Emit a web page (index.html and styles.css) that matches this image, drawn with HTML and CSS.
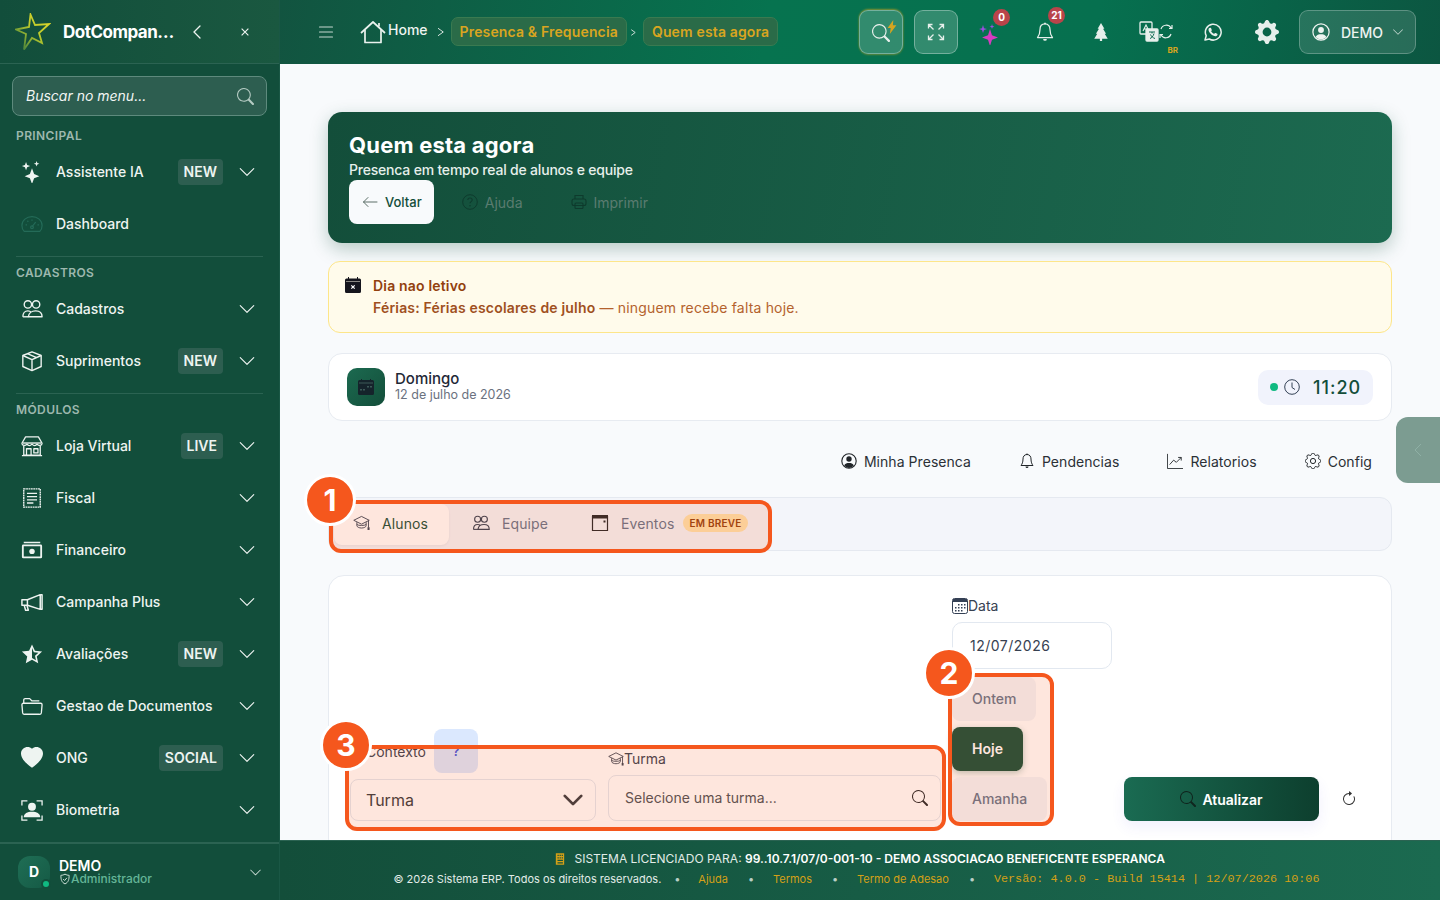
FILE: index.html
```html
<!DOCTYPE html>
<html lang="pt-BR">
<head>
    <meta charset="UTF-8">
    <meta name="viewport" content="width=device-width, initial-scale=1.0">
    <title>Quem esta agora</title>
    <link rel="stylesheet" href="styles.css">
</head>
<body>
    <svg class="sprite" xmlns="http://www.w3.org/2000/svg">
        <symbol id="chev-down" viewBox="0 0 16 16"><path fill="currentColor" d="M1.646 4.646a.5.5 0 0 1 .708 0L8 10.293l5.646-5.647a.5.5 0 0 1 .708.708l-6 6a.5.5 0 0 1-.708 0l-6-6a.5.5 0 0 1 0-.708z"/></symbol>
        <symbol id="search" viewBox="0 0 16 16"><path fill="currentColor" d="M11.742 10.344a6.5 6.5 0 1 0-1.397 1.398h-.001c.03.04.062.078.098.115l3.85 3.85a1 1 0 0 0 1.415-1.414l-3.85-3.85a1.007 1.007 0 0 0-.115-.1zM12 6.5a5.5 5.5 0 1 1-11 0 5.5 5.5 0 0 1 11 0z"/></symbol>
        <symbol id="people" viewBox="0 0 24 24"><g fill="none" stroke="currentColor" stroke-width="1.500" stroke-linejoin="round"><circle cx="7.500" cy="7" r="4"/><circle cx="16.500" cy="7" r="4"/><path d="M2 20.500c0-4 2.400-6.500 5.500-6.500 1.600 0 2.800.6 3.700 1.600M8 20.500c.4-3.800 3.600-6.500 8-6.500s7 2.700 7 6.500z"/><path d="M2 20.500h6"/></g></symbol>
        <symbol id="grad" viewBox="1 3 22 19"><g fill="none" stroke="currentColor" stroke-width="1.200" stroke-linejoin="round"><path d="M12 4 2 9l10 5 10-5z"/><path d="M6 11.500v4.500c0 1.600 3 3 6 3s6-1.400 6-3v-4.500"/><path d="M6 14.500c2 1.600 10 1.600 12 0"/><path d="M21 9.500v9"/></g><rect x="19.800" y="18" width="2.600" height="3.500" fill="currentColor"/></symbol>
    </svg>

    <div class="app">
        <aside class="sidebar">
            <div class="brand">
                <svg class="brand-logo" viewBox="0 0 36 38"><defs><linearGradient id="star" x1="0" y1="1" x2="1" y2="0"><stop offset="0" stop-color="#2f7440"/><stop offset=".55" stop-color="#b9c92c"/><stop offset="1" stop-color="#e8d92a"/></linearGradient></defs><path fill="none" stroke="url(#star)" stroke-width="1.800" stroke-linejoin="miter" d="M15.500 1.500 20 12l14-1-10 9 3 10-10-5-8 11.500 2-15.500-10-4.500 13-2.500z"/></svg>
                <span class="brand-name">DotCompan…</span>
                <svg class="brand-back" viewBox="0 0 16 16"><path fill="none" stroke="currentColor" stroke-width="1.300" stroke-linecap="round" d="M11 2 5 8l6 6"/></svg>
                <svg class="brand-close" viewBox="0 0 16 16"><path fill="none" stroke="currentColor" stroke-width="1.500" d="M3.500 3.500l9 9m0-9-9 9"/></svg>
            </div>

            <div class="menu-search">
                <span>Buscar no menu...</span>
                <svg class="menu-search-icon"><use href="#search"/></svg>
            </div>

            <nav class="nav">
                <div class="nav-label">PRINCIPAL</div>
                <a class="nav-item">
                    <svg class="nav-icon" viewBox="0 0 24 24"><path fill="currentColor" d="M12 8l2.300 6.200L20 16.500l-5.700 2.300L12 25l-2.300-6.200L4 16.500l5.700-2.300zM5.500 1l1.200 3.300L10 5.500 6.700 6.700 5.500 10 4.300 6.700 1 5.500l3.300-1.200zM17 0l.8 2.200L20 3l-2.200.8L17 6l-.8-2.200L14 3l2.200-.8z"/></svg>
                    <span class="nav-text">Assistente IA</span><span class="nav-badge">NEW</span>
                    <svg class="nav-chev"><use href="#chev-down"/></svg>
                </a>
                <a class="nav-item">
                    <svg class="nav-icon nav-icon-dim" viewBox="0 0 24 24"><g fill="none" stroke="currentColor" stroke-width="1.300"><path d="M3.500 20h17c2-2 2.500-4.500 2.500-6.500C23 8 18 4 12 4S1 8 1 13.500c0 2 .5 4.500 2.500 6.500z"/><path d="M12 15l4-5M5 13h1.500M18 13h1.500M7 8.500l1 1M12 7v1.500"/><circle cx="12" cy="15.500" r="1.500"/></g></svg>
                    <span class="nav-text">Dashboard</span>
                </a>

                <div class="nav-label nav-label-sep">CADASTROS</div>
                <a class="nav-item">
                    <svg class="nav-icon"><use href="#people"/></svg>
                    <span class="nav-text">Cadastros</span>
                    <svg class="nav-chev"><use href="#chev-down"/></svg>
                </a>
                <a class="nav-item">
                    <svg class="nav-icon" viewBox="0 0 24 24"><g fill="none" stroke="currentColor" stroke-width="1.500" stroke-linejoin="round"><path d="M12 2l10 4v12l-10 4.500L2 18V6z"/><path d="M2 6l10 4.500L22 6M12 10.500v12M7 4l10 4.300"/></g></svg>
                    <span class="nav-text">Suprimentos</span><span class="nav-badge">NEW</span>
                    <svg class="nav-chev"><use href="#chev-down"/></svg>
                </a>

                <div class="nav-label nav-label-sep">MÓDULOS</div>
                <a class="nav-item">
                    <svg class="nav-icon" viewBox="0 0 24 24"><g fill="none" stroke="currentColor" stroke-width="1.400" stroke-linejoin="round"><path d="M5 2h14l4 7c0 3-4 3-5.500 1-1.500 2-3.500 2-5.500 0-2 2-4 2-5.500 0C5 12 1 12 1 9z"/><path d="M3 12v10h18V12M1 22.500h22M6 22v-7h5v7M14 15h4.500v4.500H14z"/></g><path fill="currentColor" d="M2 8h20v1.500H2z"/></svg>
                    <span class="nav-text">Loja Virtual</span><span class="nav-badge">LIVE</span>
                    <svg class="nav-chev"><use href="#chev-down"/></svg>
                </a>
                <a class="nav-item">
                    <svg class="nav-icon" viewBox="0 0 24 24"><g fill="none" stroke="currentColor" stroke-width="1.500"><rect x="3" y="2" width="18" height="20" stroke-dasharray="2 .6"/><path d="M6.500 7h11M6.500 10.500h11M6.500 14h11M6.500 17.500h7"/></g></svg>
                    <span class="nav-text">Fiscal</span>
                    <svg class="nav-chev"><use href="#chev-down"/></svg>
                </a>
                <a class="nav-item">
                    <svg class="nav-icon" viewBox="0 0 24 24"><path fill="currentColor" d="M3 3h18v1.600H3zM2.500 6h19A1.500 1.500 0 0 1 23 7.500v12a1.500 1.500 0 0 1-1.500 1.500h-19A1.500 1.500 0 0 1 1 19.500v-12A1.500 1.500 0 0 1 2.500 6zm.5 2v11h18V8z"/><ellipse cx="12" cy="13.500" rx="3" ry="2.800" fill="currentColor"/></svg>
                    <span class="nav-text">Financeiro</span>
                    <svg class="nav-chev"><use href="#chev-down"/></svg>
                </a>
                <a class="nav-item">
                    <svg class="nav-icon" viewBox="0 0 24 24"><g fill="none" stroke="currentColor" stroke-width="1.600" stroke-linejoin="round"><path d="M1 9.500h6L21 4v16L7 15.500H1z"/><path d="M7 9.500v6M3.500 15.500l1.500 5.500h3l-1.500-5.300M21 4h2v16h-2"/></g></svg>
                    <span class="nav-text">Campanha Plus</span>
                    <svg class="nav-chev"><use href="#chev-down"/></svg>
                </a>
                <a class="nav-item">
                    <svg class="nav-icon" viewBox="0 0 24 24"><path fill="currentColor" d="M12 1.500l3.200 7 7.800.9-5.800 5.200 1.600 7.600L12 18.300l-6.800 3.900 1.600-7.600L1 9.400l7.800-.9zm0 4v10.800l4.300 2.500-1-4.900 3.700-3.300-5-.6z"/></svg>
                    <span class="nav-text">Avaliações</span><span class="nav-badge">NEW</span>
                    <svg class="nav-chev"><use href="#chev-down"/></svg>
                </a>
                <a class="nav-item">
                    <svg class="nav-icon" viewBox="0 0 24 24"><g fill="none" stroke="currentColor" stroke-width="1.400" stroke-linejoin="round"><path d="M3 9V5.500A1.500 1.500 0 0 1 4.500 4h5L12 6.500h8"/><path d="M2.500 9h19A1.500 1.500 0 0 1 23 10.500l-.8 9A2 2 0 0 1 20 21H4a2 2 0 0 1-2.200-1.500L1 10.500A1.500 1.500 0 0 1 2.500 9z"/></g></svg>
                    <span class="nav-text">Gestao de Documentos</span>
                    <svg class="nav-chev"><use href="#chev-down"/></svg>
                </a>
                <a class="nav-item">
                    <svg class="nav-icon" viewBox="0 0 16 16"><path fill="currentColor" d="M8 1.314C12.438-3.248 23.534 4.735 8 15-7.534 4.736 3.562-3.248 8 1.314z"/></svg>
                    <span class="nav-text">ONG</span><span class="nav-badge">SOCIAL</span>
                    <svg class="nav-chev"><use href="#chev-down"/></svg>
                </a>
                <a class="nav-item">
                    <svg class="nav-icon" viewBox="0 0 24 24"><path fill="none" stroke="currentColor" stroke-width="1.400" d="M1 7V2h6M17 2h6v5M23 18v5h-6M7 23H1v-5"/><circle cx="12" cy="8.500" r="4.300" fill="currentColor"/><path fill="currentColor" d="M3 20c0-4 4-6 9-6s9 2 9 6z"/></svg>
                    <span class="nav-text">Biometria</span>
                    <svg class="nav-chev"><use href="#chev-down"/></svg>
                </a>
            </nav>

            <div class="side-user">
                <div class="side-avatar">D<i class="side-dot"></i></div>
                <div class="side-user-text">
                    <div class="side-user-name">DEMO</div>
                    <div class="side-user-role">
                        <svg viewBox="0 0 16 16"><path fill="none" stroke="currentColor" stroke-width="1.300" d="M8 1.500c2 1.200 3.800 1.500 5.500 1.600 0 5.500-1 9.500-5.500 11.400C3.500 12.600 2.500 8.600 2.500 3.100 4.200 3 6 2.700 8 1.500zM5.500 8l2 2 3-3.500"/></svg>
                        <span>Administrador</span>
                    </div>
                </div>
                <svg class="side-user-chev"><use href="#chev-down"/></svg>
            </div>
        </aside>

        <div class="main">
            <header class="topbar">
                <svg class="burger" viewBox="0 0 16 16"><path fill="none" stroke="currentColor" stroke-width="1.100" stroke-linecap="round" d="M1.500 3h13M1.500 8h13M1.500 13h13"/></svg>
                <div class="crumbs">
                    <svg class="crumb-home" viewBox="0 0 26 24"><g fill="none" stroke="currentColor" stroke-width="1.700" stroke-linejoin="round"><path d="M1 13 13 2l12 11"/><path d="M5 10v12.500h16V10"/><path d="M19 3v3.500"/></g></svg>
                    <span class="crumb-home-text">Home</span>
                    <svg class="crumb-sep" viewBox="0 0 16 16"><path fill="none" stroke="currentColor" stroke-width="1.300" d="M4 3l7 5-7 5"/></svg>
                    <span class="crumb-pill">Presenca &amp; Frequencia</span>
                    <svg class="crumb-sep crumb-sep-tight" viewBox="0 0 16 16"><path fill="none" stroke="currentColor" stroke-width="1.600" d="M4 3l7 5-7 5"/></svg>
                    <span class="crumb-pill">Quem esta agora</span>
                </div>
                <div class="top-actions">
                    <div class="top-slot top-glass top-glass-glow">
                        <svg class="top-search"><use href="#search"/></svg>
                        <svg class="top-bolt" viewBox="0 0 10 16"><path fill="#d6a520" d="M6.500 0 0 9h3.500L2.500 16 10 6H6z"/></svg>
                    </div>
                    <div class="top-slot top-glass">
                        <svg class="top-icon-18" viewBox="0 0 18 18"><path fill="none" stroke="currentColor" stroke-width="1.300" d="M1.500 5.500v-4h4M1.500 1.500 6.500 6.500M16.500 5.500v-4h-4M16.500 1.500l-5 5M1.500 12.500v4h4M1.500 16.500l5-5M16.500 12.500v4h-4M16.500 16.500l-5-5"/></svg>
                    </div>
                    <div class="top-slot">
                        <svg class="top-icon-24" viewBox="0 0 24 24"><path fill="#d63bc0" d="M12 8l2 6.200 6 2.300-6 2.300-2 6.200-2-6.200-6-2.300 6-2.300z"/><path fill="#9a4fe0" d="M5 4l1 3.300L9 8 6 9 5 12 4 9 1 8l3-.7zM14 3l.6 2 1.900.7-1.900.6L14 8l-.6-1.700-1.900-.6 1.900-.7z"/></svg>
                        <span class="top-badge top-badge-zero">0</span>
                    </div>
                    <div class="top-slot">
                        <svg class="top-icon-20" viewBox="0 0 16 16"><path fill="none" stroke="currentColor" stroke-width="1" stroke-linejoin="round" d="M8 1.500c-2.800 0-4 2.200-4 4.500 0 3-.8 5-2 6.500h12c-1.200-1.500-2-3.500-2-6.500 0-2.300-1.200-4.500-4-4.500z"/><path fill="currentColor" d="M6.500 13.500h3a1.500 1.500 0 0 1-3 0zM7.300.5h1.400v1.300H7.300z"/></svg>
                        <span class="top-badge top-badge-many">21</span>
                    </div>
                    <div class="top-slot">
                        <svg class="top-icon-18" viewBox="0 0 16 16"><path fill="currentColor" d="M8 0l3 5H9.800l2.700 4.500h-1.200L14 14H9v2H7v-2H2l2.700-4.500H3.500L6.200 5H5z"/></svg>
                    </div>
                    <div class="top-slot">
                        <svg class="top-translate" viewBox="0 0 34 22"><g fill="none" stroke="currentColor" stroke-width="1.300"><rect x="1" y="1" width="12" height="12" rx="1"/><rect x="7" y="8" width="12" height="12" rx="1" fill="#e8f0ec"/><path d="M4 10l3-6 3 6M5 8h4" stroke-width="1.100"/><path d="M10 11h6M13 11v1.500M15 12.500c-.8 3-2.500 4.500-4 5M11.500 13.500c.8 2 2.400 3.300 4.500 4" stroke="#0c6a50" stroke-width="1"/><path d="M22 8a5.500 5.500 0 0 1 10-1M32 13a5.500 5.500 0 0 1-10 1M33 4v3.500h-3M21 17v-3.500h3" stroke-width="1.200"/></g></svg>
                        <span class="top-br">BR</span>
                    </div>
                    <div class="top-slot">
                        <svg class="top-icon-18 top-whats" viewBox="0 0 18 18"><path fill="none" stroke="currentColor" stroke-width="1.500" stroke-linejoin="round" d="M1 17l1.200-4.300A7.900 7.900 0 1 1 5.300 16z"/><path fill="currentColor" d="M6.300 4.800c.3 0 .6 0 .8.500l.7 1.600c.1.300 0 .5-.1.700l-.6.700c.7 1.200 1.700 2.100 3 2.700l.8-.9c.2-.2.400-.3.700-.1l1.500.7c.4.200.4.400.4.700 0 1.100-1.200 1.800-2.100 1.800-2.900-.2-6.700-3.400-6.900-6.500 0-.9.500-1.900 1.800-1.900z"/></svg>
                    </div>
                    <div class="top-slot">
                        <svg class="top-gear" viewBox="0 0 16 16"><path fill="currentColor" d="M9.405 1.050c-.413-1.400-2.397-1.400-2.810 0l-.1.340a1.464 1.464 0 0 1-2.105.872l-.31-.17c-1.283-.698-2.686.705-1.987 1.987l.169.311c.446.820.023 1.841-.872 2.105l-.34.100c-1.400.413-1.400 2.397 0 2.810l.34.100a1.464 1.464 0 0 1 .872 2.105l-.17.310c-.698 1.283.705 2.686 1.987 1.987l.311-.169a1.464 1.464 0 0 1 2.105.872l.1.340c.413 1.400 2.397 1.400 2.810 0l.1-.340a1.464 1.464 0 0 1 2.105-.872l.31.170c1.283.698 2.686-.705 1.987-1.987l-.169-.311a1.464 1.464 0 0 1 .872-2.105l.34-.100c1.400-.413 1.400-2.397 0-2.810l-.34-.100a1.464 1.464 0 0 1-.872-2.105l.17-.310c.698-1.283-.705-2.686-1.987-1.987l-.311.169a1.464 1.464 0 0 1-2.105-.872l-.1-.340zM8 10.930a2.929 2.929 0 1 1 0-5.860 2.929 2.929 0 0 1 0 5.858z"/></svg>
                    </div>
                    <div class="top-user">
                        <svg class="top-user-icon" viewBox="0 0 16 16"><circle cx="8" cy="8" r="7.200" fill="none" stroke="currentColor" stroke-width="1.100"/><circle cx="8" cy="6.200" r="2.600" fill="currentColor"/><path fill="currentColor" d="M3.200 12.500C4 10.500 6 10 8 10s4 .5 4.800 2.500A6.500 6.500 0 0 1 8 14.600a6.500 6.500 0 0 1-4.800-2.100z"/></svg>
                        <span>DEMO</span>
                        <svg class="top-user-chev"><use href="#chev-down"/></svg>
                    </div>
                </div>
            </header>

            <main class="content">
                <section class="hero">
                    <h1>Quem esta agora</h1>
                    <p>Presenca em tempo real de alunos e equipe</p>
                    <div class="hero-actions">
                        <button class="btn-back">
                            <svg viewBox="0 0 16 16"><path fill="none" stroke="currentColor" stroke-width="1" stroke-linecap="round" d="M15 8H1.500M6 3.500 1.500 8 6 12.500"/></svg>
                            Voltar
                        </button>
                        <button class="btn-ghost">
                            <svg viewBox="0 0 16 16"><circle cx="8" cy="8" r="7.300" fill="none" stroke="#0e3b2d" stroke-width="1"/><path fill="none" stroke="#0e3b2d" stroke-width="1.100" d="M5.800 6c0-1.300 1-2 2.200-2s2.200.8 2.200 2c0 1.600-2.200 1.600-2.200 3.300"/><circle cx="8" cy="11.700" r=".8" fill="#0e3b2d"/></svg>
                            Ajuda
                        </button>
                        <button class="btn-ghost btn-ghost-print">
                            <svg viewBox="0 0 16 16"><g fill="none" stroke="#0e3b2d" stroke-width="1.100"><path d="M4 5V1.500h8V5"/><rect x="1" y="5" width="14" height="6.500" rx="2"/><rect x="4" y="9" width="8" height="5.500" rx="1"/></g></svg>
                            Imprimir
                        </button>
                    </div>
                </section>

                <section class="notice">
                    <svg class="notice-icon" viewBox="0 0 16 16"><path fill="#15151d" d="M3 0h1v1.500h8V0h1v1.500h1.500A1.500 1.500 0 0 1 16 3v11.500a1.500 1.500 0 0 1-1.500 1.500h-13A1.500 1.500 0 0 1 0 14.500V3a1.500 1.500 0 0 1 1.500-1.500H3zM1 4.500V5h14v-.5z"/><path stroke="#fff" stroke-width="1.200" d="M6.300 8.300l3.400 3.400m0-3.400-3.400 3.400"/></svg>
                    <div>
                        <div class="notice-title">Dia nao letivo</div>
                        <div class="notice-text"><strong>Férias: Férias escolares de julho</strong> — ninguem recebe falta hoje.</div>
                    </div>
                </section>

                <section class="day-card">
                    <div class="day-icon">
                        <svg viewBox="0 0 16 16"><path fill="#15232b" d="M3 0h1v1h8V0h1v1h1.500A1.500 1.500 0 0 1 16 2.500v12a1.500 1.500 0 0 1-1.500 1.500h-13A1.500 1.500 0 0 1 0 14.500v-12A1.500 1.500 0 0 1 1.500 1H3z"/><path fill="#3d5a58" d="M1 3.500h14v1H1zM9 7h2v1.500H9zM12 7h2v1.500h-2zM2 10h2v1.500H2zM5 10h2v1.500H5z"/></svg>
                    </div>
                    <div class="day-text">
                        <div class="day-name">Domingo</div>
                        <div class="day-date">12 de julho de 2026</div>
                    </div>
                    <div class="clock">
                        <i class="clock-dot"></i>
                        <svg viewBox="0 0 16 16"><circle cx="8" cy="8" r="7.300" fill="none" stroke="#334155" stroke-width="1"/><path fill="none" stroke="#334155" stroke-width="1" d="M8 3.500V8.500l3 2"/></svg>
                        <span>11:20</span>
                    </div>
                </section>

                <nav class="quick-links">
                    <a>
                        <svg viewBox="0 0 16 16"><circle cx="8" cy="8" r="7.200" fill="none" stroke="#212529" stroke-width="1.100"/><circle cx="8" cy="6" r="2.700" fill="#212529"/><path fill="#212529" d="M3.200 12.500C4 10.500 6 10 8 10s4 .5 4.800 2.500A6.500 6.500 0 0 1 8 15a6.500 6.500 0 0 1-4.800-2.500z"/></svg>
                        Minha Presenca
                    </a>
                    <a>
                        <svg viewBox="0 0 16 16"><path fill="none" stroke="#212529" stroke-width="1" stroke-linejoin="round" d="M8 1.500c-2.800 0-4 2.200-4 4.500 0 3-.8 5-2 6.500h12c-1.200-1.500-2-3.500-2-6.500 0-2.300-1.200-4.500-4-4.500z"/><path fill="#212529" d="M6.500 13.500h3a1.500 1.500 0 0 1-3 0zM7.500.5h1v1.300h-1z"/></svg>
                        Pendencias
                    </a>
                    <a>
                        <svg viewBox="0 0 18 18"><path fill="none" stroke="#212529" stroke-width="1" d="M.5 1v16.500H18M3 13l4.500-5 3 2.500L16 5M12.500 5H16v3.500"/></svg>
                        Relatorios
                    </a>
                    <a>
                        <svg viewBox="0 0 16 16"><path fill="none" stroke="#212529" stroke-width="1" d="M9.405 1.050c-.413-1.400-2.397-1.400-2.810 0l-.1.340a1.464 1.464 0 0 1-2.105.872l-.31-.17c-1.283-.698-2.686.705-1.987 1.987l.169.311c.446.820.023 1.841-.872 2.105l-.34.100c-1.400.413-1.400 2.397 0 2.810l.34.100a1.464 1.464 0 0 1 .872 2.105l-.17.310c-.698 1.283.705 2.686 1.987 1.987l.311-.169a1.464 1.464 0 0 1 2.105.872l.1.340c.413 1.400 2.397 1.400 2.810 0l.1-.340a1.464 1.464 0 0 1 2.105-.872l.31.170c1.283.698 2.686-.705 1.987-1.987l-.169-.311a1.464 1.464 0 0 1 .872-2.105l.34-.100c1.400-.413 1.400-2.397 0-2.810l-.34-.100a1.464 1.464 0 0 1-.872-2.105l.17-.310c.698-1.283-.705-2.686-1.987-1.987l-.311.169a1.464 1.464 0 0 1-2.105-.872l-.1-.340z"/><circle cx="8" cy="8" r="2.600" fill="none" stroke="#212529" stroke-width="1"/></svg>
                        Config
                    </a>
                </nav>

                <div class="tabs">
                    <a class="tab tab-active"><svg class="tab-icon"><use href="#grad"/></svg>Alunos</a>
                    <a class="tab tab-team"><svg class="tab-icon"><use href="#people"/></svg>Equipe</a>
                    <a class="tab tab-events">
                        <svg class="tab-icon" viewBox="0 0 18 18"><path fill="none" stroke="#212529" stroke-width="1.200" d="M1.500 2.500h15v14h-15z"/><path fill="#212529" d="M1 1h16v3.500H1z"/><rect x="12.500" y="6.500" width="2" height="2" fill="#212529"/></svg>
                        Eventos<span class="tab-badge">EM BREVE</span>
                    </a>
                </div>

                <section class="filter-card">
                    <div class="filter-row">
                        <div class="field field-context">
                            <div class="context-head">
                                <span class="field-label">Contexto</span>
                                <button class="help-btn">?</button>
                            </div>
                            <div class="fake-select">
                                <span>Turma</span>
                                <svg viewBox="0 0 16 16"><path fill="none" stroke="#343a40" stroke-width="2" stroke-linecap="round" stroke-linejoin="round" d="M2 5l6 6 6-6"/></svg>
                            </div>
                        </div>
                        <div class="field field-class">
                            <div class="field-label field-label-icon"><svg><use href="#grad"/></svg>Turma</div>
                            <div class="class-search">
                                <span>Selecione uma turma...</span>
                                <svg><use href="#search"/></svg>
                            </div>
                        </div>
                        <div class="field field-date">
                            <div class="field-label field-label-icon">
                                <svg viewBox="0 0 16 16"><rect x=".5" y=".5" width="15" height="15" rx="2" fill="#fff" stroke="#344054"/><path fill="#344054" d="M1 1h14v3H1zM6 6h1.500v1.500H6zM9 6h1.500v1.500H9zM12 6h1.500v1.500H12zM3 9h1.500v1.500H3zM6 9h1.500v1.500H6zM9 9h1.500v1.500H9zM12 9h1.500v1.500H12zM3 12h1.500v1.500H3zM6 12h1.500v1.500H6zM9 12h1.500v1.500H9z"/></svg>
                                Data
                            </div>
                            <div class="date-input">12/07/2026</div>
                            <div class="day-buttons">
                                <button class="day-btn">Ontem</button>
                                <button class="day-btn day-btn-active">Hoje</button>
                                <button class="day-btn">Amanha</button>
                            </div>
                        </div>
                        <button class="btn-refresh-main">
                            <svg><use href="#search"/></svg>
                            Atualizar
                        </button>
                        <button class="btn-reload">
                            <svg viewBox="0 0 16 16"><path fill="#333" d="M8 3a5 5 0 1 0 4.546 2.914.5.5 0 0 1 .908-.417A6 6 0 1 1 8 2v1z"/><path fill="#333" d="M8 4.466V.534a.25.25 0 0 1 .41-.192l2.360 1.966c.12.100.12.284 0 .384L8.410 4.658A.25.25 0 0 1 8 4.466z"/></svg>
                        </button>
                    </div>
                </section>
            </main>

            <footer class="footer">
                <div class="footer-license">
                    <svg viewBox="0 0 12 14"><path fill="#d4a017" d="M1 0h10v14H1zM3 2v1.500h1.500V2zm2.500 0v1.500H7V2zM8 2v1.500h1.500V2zM3 5v1.500h1.500V5zm2.500 0v1.500H7V5zM8 5v1.500h1.500V5zM3 8v1.500h6.500V8zm0 3v1.500h6.500V11z" fill-rule="evenodd"/></svg>
                    <span>SISTEMA LICENCIADO PARA:</span> <strong>99..10.7.1/07/0-001-10 - DEMO ASSOCIACAO BENEFICENTE ESPERANCA</strong>
                </div>
                <div class="footer-meta">
                    <span>© 2026 Sistema ERP. Todos os direitos reservados.</span>
                    <i class="footer-dot-first">•</i><a>Ajuda</a>
                    <i>•</i><a>Termos</a>
                    <i>•</i><a>Termo de Adesao</a>
                    <i>•</i><code>Versão: 4.0.0 - Build 15414 | 12/07/2026 10:06</code>
                </div>
            </footer>
        </div>

        <!-- abas e destaques por cima da tela -->
        <div class="side-tab">
            <svg viewBox="0 0 16 16"><path fill="none" stroke="#8fb0a5" stroke-width="1" d="M11 2 5 8l6 6"/></svg>
        </div>
        <div class="mark mark-tabs"></div>
        <div class="mark mark-days"></div>
        <div class="mark mark-form"></div>
        <div class="pin pin-1">1</div>
        <div class="pin pin-2">2</div>
        <div class="pin pin-3">3</div>
    </div>
</body>
</html>
```

FILE: styles.css
```css
* {
    box-sizing: border-box;
}
html, body {
    height: 100%;
}
body {
    margin: 0;
    font-family: Inter, "Noto Sans", sans-serif;
    color: #212529;
    background-color: #f8fafc;
    overflow: hidden;
}
button {
    font-family: inherit;
    border: none;
    cursor: pointer;
}
.sprite {
    position: absolute;
    width: 0;
    height: 0;
}
.app {
    position: relative;
    display: grid;
    grid-template-columns: 280px 1fr;
    height: 900px;
    overflow: hidden;
}

/* sidebar */
.sidebar {
    display: flex;
    flex-direction: column;
    background-color: #124e3b;
    color: #eef4f1;
    border-right: 1px solid #1a5745;
}
.brand {
    display: flex;
    align-items: center;
    height: 64px;
    padding-left: 15px;
    border-bottom: 1px solid #2b6352;
    background: linear-gradient(90deg, #124e3b, #1a5840);
}
.brand-logo {
    width: 36px;
    height: 38px;
    flex: none;
}
.brand-name {
    margin-left: 12px;
    width: 126px;
    font-size: 17px;
    font-weight: 700;
    letter-spacing: -0.5px;
    color: #fff;
}
.brand-back {
    width: 16px;
    height: 16px;
}
.brand-close {
    width: 12px;
    height: 12px;
    margin-left: 34px;
}
.menu-search {
    display: flex;
    align-items: center;
    justify-content: space-between;
    height: 40px;
    margin: 12px 12px 0 12px;
    padding: 0 12px 0 13px;
    background-color: #2d5e50;
    border: 1px solid #5e8a7d;
    border-radius: 8px;
    font-size: 14px;
    font-style: italic;
    color: #f1f5f3;
}
.menu-search span {
    padding-bottom: 2px;
}
.menu-search-icon {
    width: 17px;
    height: 17px;
    color: #b5cbc3;
}
.nav {
    flex: 1;
    padding: 12px 16px 0;
}
.nav-label {
    height: 16px;
    margin-bottom: 2px;
    font-size: 12px;
    line-height: 16px;
    font-weight: 600;
    letter-spacing: 0.4px;
    color: #9db8ae;
}
.nav-label-sep {
    height: auto;
    margin-top: 6px;
    padding-top: 8px;
    border-top: 1px solid #2b6352;
}
.nav-item {
    display: flex;
    align-items: center;
    height: 52px;
    padding-left: 5px;
    padding-right: 7px;
    font-size: 14px;
    font-weight: 500;
    color: #eef4f1;
}
.nav-icon {
    width: 22px;
    height: 22px;
    flex: none;
    margin-right: 13px;
}
.nav-icon-dim {
    color: #246b58;
}
.nav-text {
    flex: 1;
    padding-bottom: 2px;
    white-space: nowrap;
}
.nav-badge {
    height: 26px;
    padding: 0 6px;
    margin-right: 15px;
    background-color: #2d5e50;
    border-radius: 4px;
    font-size: 14px;
    line-height: 26px;
    font-weight: 600;
}
.nav-chev {
    width: 18px;
    height: 18px;
    flex: none;
    margin-left: auto;
}
.nav-badge + .nav-chev {
    margin-left: 0;
}
.side-user {
    display: flex;
    align-items: center;
    height: 58px;
    padding: 0 17px 0 18px;
    border-top: 2px solid #2b6352;
}
.side-avatar {
    position: relative;
    width: 32px;
    height: 32px;
    border-radius: 12px;
    background: linear-gradient(135deg, #1f6e55, #155a45);
    font-size: 14px;
    line-height: 32px;
    font-weight: 700;
    text-align: center;
    color: #fff;
}
.side-dot {
    position: absolute;
    right: -1px;
    bottom: -1px;
    width: 10px;
    height: 10px;
    background-color: #10b981;
    border: 2px solid #124e3b;
    border-radius: 50%;
}
.side-user-text {
    flex: 1;
    margin-left: 9px;
    line-height: 13px;
}
.side-user-name {
    font-size: 14px;
    font-weight: 600;
    color: #fff;
}
.side-user-role {
    display: flex;
    align-items: center;
    font-size: 12px;
    font-weight: 500;
    color: #64b597;
}
.side-user-role svg {
    width: 12px;
    height: 12px;
    color: #cfe0d9;
}
.side-user-chev {
    width: 13px;
    height: 13px;
    color: #cfe0d9;
}

/* main */
.main {
    display: flex;
    flex-direction: column;
    min-width: 0;
    height: 900px;
}
.topbar {
    display: flex;
    align-items: center;
    height: 64px;
    flex: none;
    padding: 0 24px 0 38px;
    background: linear-gradient(100deg, #125440 0%, #06734f 42%, #06704f 70%, #0c5641 100%);
    color: #eaf2ee;
}
.burger {
    width: 16px;
    height: 16px;
    color: #c5d8d0;
}
.crumbs {
    display: flex;
    align-items: center;
    margin-left: 26px;
}
.crumb-home {
    width: 26px;
    height: 24px;
}
.crumb-home-text {
    margin: 0 0 5px 2px;
    font-size: 14px;
    font-weight: 500;
    color: #eef4f1;
}
.crumb-sep {
    width: 12px;
    height: 12px;
    margin: 0 4px 0 7px;
    color: #dbe7e2;
}
.crumb-sep-tight {
    width: 9px;
    height: 9px;
    margin: 0 5px 0 2px;
}
.crumb-pill {
    height: 29px;
    margin-bottom: 2px;
    padding: 0 8px;
    background-color: #2a6b48;
    border: 1px solid #3a7a50;
    border-radius: 7px;
    font-size: 14px;
    line-height: 27px;
    font-weight: 600;
    letter-spacing: 0.15px;
    color: #d9a520;
    white-space: nowrap;
}
.top-actions {
    display: flex;
    align-items: center;
    gap: 11px;
    margin-left: auto;
}
.top-slot {
    position: relative;
    display: flex;
    align-items: center;
    justify-content: center;
    width: 44px;
    height: 44px;
    color: #e6efeb;
}
.top-glass {
    background-color: rgba(255, 255, 255, 0.18);
    border: 1px solid rgba(255, 255, 255, 0.32);
    border-radius: 9px;
}
.top-glass-glow {
    box-shadow: 0 -1px 2px rgba(214, 165, 32, 0.6), 0 1px 2px rgba(214, 165, 32, 0.4);
}
.top-search {
    width: 18px;
    height: 18px;
    margin-right: 1px;
    margin-top: 2px;
}
.top-bolt {
    position: absolute;
    top: 9px;
    right: 5px;
    width: 10px;
    height: 14px;
}
.top-icon-18 {
    width: 18px;
    height: 18px;
}
.top-whats {
    margin-left: 4px;
}
.top-icon-20 {
    width: 20px;
    height: 20px;
    margin-right: 2px;
}
.top-icon-24 {
    width: 24px;
    height: 24px;
    margin-right: 3px;
    margin-top: 2px;
}
.top-badge {
    position: absolute;
    top: -1px;
    height: 17px;
    background-color: #b9444a;
    border-radius: 9px;
    font-size: 10px;
    line-height: 17px;
    font-weight: 700;
    text-align: center;
    color: #fff;
}
.top-badge-zero {
    right: 3px;
    width: 17px;
}
.top-badge-many {
    right: 3px;
    top: -3px;
    width: 17px;
}
.top-translate {
    width: 34px;
    height: 22px;
}
.top-br {
    position: absolute;
    right: 0;
    bottom: -1px;
    font-size: 8px;
    font-weight: 700;
    color: #d6a520;
}
.top-gear {
    width: 24px;
    height: 24px;
    margin-left: 2px;
}
.top-user {
    display: flex;
    align-items: center;
    width: 117px;
    height: 44px;
    padding: 0 11px 0 12px;
    background-color: rgba(255, 255, 255, 0.12);
    border: 1px solid rgba(255, 255, 255, 0.25);
    border-radius: 9px;
    font-size: 14px;
    font-weight: 500;
    color: #eef4f1;
}
.top-user-icon {
    width: 18px;
    height: 18px;
    margin-right: 11px;
}
.top-user-chev {
    width: 12px;
    height: 12px;
    margin-left: auto;
    color: #c5d8d0;
}

/* conteudo */
.content {
    flex: 1;
    min-height: 0;
    overflow: hidden;
    padding: 48px 48px 0;
}
.hero {
    height: 131px;
    padding: 20px 21px 0;
    background: linear-gradient(100deg, #134e3a, #1c6a50);
    border-radius: 14px;
    box-shadow: 0 6px 18px rgba(19, 78, 58, 0.28);
    color: #fff;
}
.hero h1 {
    margin: 0;
    height: 26px;
    font-size: 22px;
    line-height: 26px;
    font-weight: 700;
    letter-spacing: 0.2px;
}
.hero p {
    margin: 3px 0 0;
    height: 19px;
    font-size: 14px;
    line-height: 18px;
    font-weight: 500;
    color: #e6efeb;
    letter-spacing: -0.2px;
}
.hero-actions {
    display: flex;
    align-items: center;
}
.btn-back {
    display: flex;
    align-items: center;
    gap: 7px;
    height: 44px;
    padding: 0 12px 0 13px;
    background-color: #f8fafc;
    border-radius: 8px;
    font-size: 13px;
    font-weight: 500;
    color: #134e3a;
}
.btn-back svg {
    width: 16px;
    height: 16px;
    color: #5c6f68;
}
.btn-ghost {
    display: flex;
    align-items: center;
    gap: 7px;
    height: 44px;
    margin-left: 28px;
    padding: 0;
    background: none;
    font-size: 14px;
    color: #5a7c70;
}
.btn-ghost svg {
    width: 16px;
    height: 16px;
}
.btn-ghost-print {
    margin-left: 48px;
}
.notice {
    display: flex;
    height: 72px;
    margin-top: 18px;
    padding: 15px 16px 0;
    background-color: #fffbeb;
    border: 1px solid #fde68a;
    border-radius: 12px;
    letter-spacing: 0.18px;
}
.notice-icon {
    width: 16px;
    height: 16px;
    flex: none;
    margin-right: 12px;
}
.notice-title {
    font-size: 14px;
    line-height: 18px;
    font-weight: 600;
    color: #92400e;
}
.notice-text {
    margin-top: 4px;
    font-size: 14px;
    line-height: 18px;
    color: #b4622d;
}
.notice-text strong {
    font-weight: 600;
    color: #a0501e;
}
.day-card {
    display: flex;
    align-items: center;
    height: 68px;
    margin-top: 20px;
    padding: 0 18px;
    background-color: #fff;
    border: 1px solid #e7ebf1;
    border-radius: 14px;
}
.day-icon {
    display: flex;
    align-items: center;
    justify-content: center;
    width: 38px;
    height: 38px;
    background: linear-gradient(135deg, #1c6a50, #134e3a);
    border-radius: 10px;
}
.day-icon svg {
    width: 16px;
    height: 16px;
}
.day-text {
    flex: 1;
    margin-left: 10px;
    margin-bottom: 2px;
}
.day-name {
    font-size: 15px;
    line-height: 16px;
    font-weight: 500;
    color: #1f2937;
}
.day-date {
    font-size: 12.5px;
    line-height: 15px;
    color: #6b7280;
}
.clock {
    display: flex;
    align-items: center;
    width: 115px;
    height: 35px;
    padding-left: 12px;
    background-color: #f1f3fc;
    border-radius: 10px;
}
.clock-dot {
    width: 8px;
    height: 8px;
    background-color: #10b981;
    border-radius: 50%;
}
.clock svg {
    width: 16px;
    height: 16px;
    margin-left: 6px;
}
.clock span {
    margin-left: 13px;
    font-size: 18px;
    font-weight: 500;
    letter-spacing: 1px;
    color: #134e3a;
}
.quick-links {
    display: flex;
    justify-content: flex-end;
    gap: 48px;
    height: 76px;
    padding: 31px 20px 0 0;
}
.quick-links a {
    display: flex;
    align-items: center;
    gap: 7px;
    height: 18px;
    font-size: 14px;
    letter-spacing: 0.05px;
    color: #2b3036;
}
.quick-links svg {
    width: 16px;
    height: 16px;
}
.tabs {
    display: flex;
    align-items: center;
    height: 54px;
    padding: 0 5px;
    background-color: #f3f5fa;
    border: 1px solid #e5e9f0;
    border-radius: 12px;
}
.tab {
    display: flex;
    align-items: center;
    height: 41px;
    padding: 0 21px 2px 19px;
    font-size: 14px;
    letter-spacing: 0.1px;
    color: #64748b;
}
.tab-icon {
    width: 18px;
    height: 18px;
    margin-right: 12px;
    color: #334155;
}
.tab-active {
    width: 115px;
    background-color: #fff;
    border-radius: 8px;
    box-shadow: 0 1px 3px rgba(0, 0, 0, 0.06);
    color: #134e3a;
}
.tab-team {
    padding-left: 23px;
}
.tab-events {
    padding-left: 22px;
}
.tab-badge {
    height: 18px;
    margin-left: 9px;
    padding: 0 6px;
    background-color: #fde3ad;
    border-radius: 9px;
    font-size: 10px;
    line-height: 18px;
    font-weight: 600;
    letter-spacing: 0.25px;
    color: #92400e;
}
.filter-card {
    height: 280px;
    margin-top: 24px;
    padding: 22px 20px 0 21px;
    background-color: #fff;
    border: 1px solid #e7ebf1;
    border-radius: 16px;
}
.filter-row {
    display: flex;
    align-items: flex-end;
}
.field-label {
    font-size: 14px;
    line-height: 16px;
    color: #374151;
}
.field-label-icon {
    display: flex;
    align-items: center;
}
.field-label-icon svg {
    width: 16px;
    height: 16px;
    flex: none;
}
.field-context {
    width: 246px;
    flex: none;
}
.context-head {
    display: flex;
    align-items: center;
    height: 44px;
    margin-bottom: 6px;
    padding-left: 16px;
}
.context-head .field-label {
    width: 68px;
    margin-top: 2px;
}
.help-btn {
    width: 44px;
    height: 44px;
    padding: 0;
    background-color: #dbe8fe;
    border-radius: 8px;
    font-size: 13px;
    font-weight: 600;
    color: #3f55e0;
}
.fake-select {
    display: flex;
    align-items: center;
    justify-content: space-between;
    height: 42px;
    padding: 0 11px 0 15px;
    background-color: #fff;
    border: 1px solid #e2e8f0;
    border-radius: 8px;
    font-size: 16px;
    color: #343a40;
}
.fake-select svg {
    width: 22px;
    height: 22px;
}
.field-class {
    width: 333px;
    flex: none;
    margin-left: 12px;
}
.field-class .field-label {
    margin-bottom: 8px;
}
.class-search {
    display: flex;
    align-items: center;
    justify-content: space-between;
    height: 46px;
    padding: 0 12px 0 16px;
    background-color: #fff;
    border: 1px solid #e2e8f0;
    border-radius: 8px;
    font-size: 14px;
    color: #495057;
}
.class-search span {
    padding-bottom: 2px;
}
.class-search svg {
    width: 16px;
    height: 16px;
    color: #212529;
}
.field-date {
    width: 160px;
    flex: none;
    margin-left: 11px;
}
.date-input {
    height: 47px;
    margin-top: 8px;
    padding-left: 17px;
    background-color: #fff;
    border: 1px solid #e2e8f0;
    border-radius: 10px;
    font-size: 14px;
    line-height: 45px;
    letter-spacing: 0.5px;
    color: #374151;
}
.day-buttons {
    display: flex;
    flex-direction: column;
    align-items: flex-start;
    gap: 6px;
    margin-top: 8px;
}
.day-btn {
    height: 44px;
    padding: 0 20px 2px;
    background-color: #f3f5fa;
    border-radius: 8px;
    font-size: 14px;
    font-weight: 500;
    color: #64748b;
}
.day-btn-active {
    background-color: #134e3a;
    box-shadow: 0 2px 6px rgba(19, 78, 58, 0.3);
    font-weight: 600;
    color: #fff;
}
.btn-refresh-main {
    display: flex;
    align-items: center;
    justify-content: center;
    gap: 6px;
    width: 195px;
    height: 44px;
    margin-left: 12px;
    background: linear-gradient(90deg, #1a6b52, #0d3f2e);
    border-radius: 8px;
    box-shadow: 0 6px 14px rgba(79, 70, 229, 0.08);
    font-size: 14px;
    font-weight: 600;
    color: #fff;
}
.btn-refresh-main svg {
    width: 16px;
    height: 16px;
    color: #10251e;
}
.btn-reload {
    display: flex;
    align-items: center;
    justify-content: center;
    width: 36px;
    height: 44px;
    margin-left: 12px;
    padding: 0;
    background: none;
}
.btn-reload svg {
    width: 16px;
    height: 16px;
}
.footer {
    flex: none;
    height: 60px;
    padding-top: 9px;
    background: linear-gradient(90deg, #134e3a, #1b6a50);
    border-top: 1px solid #2b6352;
    color: #e2ece8;
    text-align: center;
}
.footer-license {
    height: 18px;
    font-size: 12px;
    line-height: 18px;
}
.footer-license svg {
    width: 10px;
    height: 12px;
    margin-right: 6px;
    vertical-align: -2px;
}
.footer-license strong {
    font-weight: 600;
    color: #fff;
}
.footer-meta {
    display: flex;
    justify-content: center;
    align-items: center;
    height: 18px;
    margin-top: 2px;
    padding-right: 7px;
    font-size: 11px;
}
.footer-meta i {
    width: 4px;
    margin: 0 21px 0 20px;
    font-style: normal;
    color: #b9cfc6;
}
.footer-meta .footer-dot-first {
    margin: 0 20px 0 13px;
}
.footer-meta a {
    color: #d4a017;
}
.footer-meta code {
    font-family: "Liberation Mono", monospace;
    font-size: 11.8px;
    color: #d4a017;
}

/* itens sobrepostos */
.side-tab {
    position: absolute;
    top: 417px;
    right: 0;
    display: flex;
    align-items: center;
    justify-content: center;
    width: 44px;
    height: 66px;
    background-color: #7c9c91;
    border-radius: 12px 0 0 12px;
}
.side-tab svg {
    width: 16px;
    height: 16px;
}
.mark {
    position: absolute;
    background-color: rgba(249, 87, 26, 0.15);
    border: 4px solid #f5571d;
    border-radius: 12px;
}
.mark-tabs {
    left: 329px;
    top: 500px;
    width: 443px;
    height: 53px;
}
.mark-days {
    left: 948px;
    top: 673px;
    width: 106px;
    height: 153px;
}
.mark-form {
    left: 345px;
    top: 745px;
    width: 601px;
    height: 86px;
}
.pin {
    position: absolute;
    width: 52px;
    height: 52px;
    background-color: #f5571d;
    border: 3px solid #fff;
    border-radius: 50%;
    font-size: 30px;
    line-height: 46px;
    font-weight: 700;
    text-align: center;
    color: #fff;
}
.pin-1 {
    left: 304px;
    top: 474px;
}
.pin-2 {
    left: 923px;
    top: 647px;
}
.pin-3 {
    left: 320px;
    top: 719px;
}
```
